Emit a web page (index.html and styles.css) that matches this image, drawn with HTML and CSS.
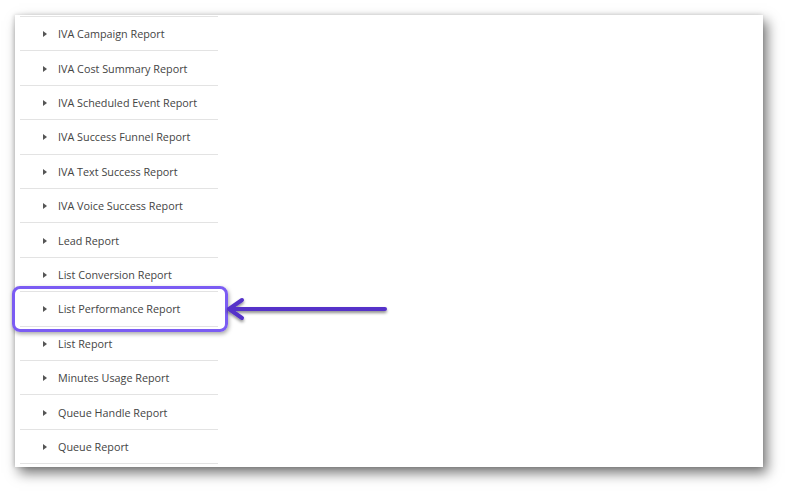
FILE: index.html
```html
<!DOCTYPE html>
<html>
<head>
<meta charset="utf-8">
<link rel="stylesheet" href="styles.css">
</head>
<body>
<div class="panel">
  <ul class="reports">
    <li class="row"><span class="caret"></span>IVA Campaign Report</li>
    <li class="row"><span class="caret"></span>IVA Cost Summary Report</li>
    <li class="row"><span class="caret"></span>IVA Scheduled Event Report</li>
    <li class="row"><span class="caret"></span>IVA Success Funnel Report</li>
    <li class="row"><span class="caret"></span>IVA Text Success Report</li>
    <li class="row"><span class="caret"></span>IVA Voice Success Report</li>
    <li class="row"><span class="caret"></span>Lead Report</li>
    <li class="row"><span class="caret"></span>List Conversion Report</li>
    <li class="row"><span class="caret"></span>List Performance Report</li>
    <li class="row"><span class="caret"></span>List Report</li>
    <li class="row"><span class="caret"></span>Minutes Usage Report</li>
    <li class="row"><span class="caret"></span>Queue Handle Report</li>
    <li class="row last"><span class="caret"></span>Queue Report</li>
  </ul>
</div>
<div class="highlight"></div>
<svg class="arrow" width="180" height="40" viewBox="0 0 180 40">
  <defs>
    <filter id="sh" x="-10%" y="-50%" width="120%" height="200%">
      <feDropShadow dx="0" dy="2" stdDeviation="1.5" flood-color="#000" flood-opacity="0.45"/>
    </filter>
  </defs>
  <g filter="url(#sh)" stroke="#5533c9" stroke-width="4" stroke-linecap="round" stroke-linejoin="round" fill="none">
    <path d="M5 20 H161"/>
    <path d="M18 11 L5 20 L18 29"/>
  </g>
</svg>
</body>
</html>
```
FILE: styles.css
```css
html, body {
  margin: 0;
  padding: 0;
  background: #ffffff;
}
body {
  width: 788px;
  height: 492px;
  position: relative;
  overflow: hidden;
  font-family: "Open Sans", "Liberation Sans", sans-serif;
}
.panel {
  position: absolute;
  left: 15px;
  top: 15px;
  width: 748px;
  height: 452px;
  background: #ffffff;
  box-shadow: 4px 6px 12px rgba(0, 0, 0, 0.55), -1px 0 4px rgba(0, 0, 0, 0.15);
}
.reports {
  list-style: none;
  margin: 1px 0 0 5px;
  padding: 0;
  width: 198px;
}
.row {
  display: flex;
  align-items: center;
  height: 33.42px;
  border-top: 1px solid #e3e3e3;
  font-size: 10.8px;
  color: #444444;
  padding-left: 23px;
}
.row.last {
  border-bottom: 1px solid #e3e3e3;
}
.caret {
  width: 0;
  height: 0;
  border-top: 3.5px solid transparent;
  border-bottom: 3.5px solid transparent;
  border-left: 4px solid #555555;
  margin-right: 11px;
  margin-top: 1px;
}
.highlight {
  position: absolute;
  left: 12px;
  top: 286px;
  width: 210px;
  height: 40px;
  border: 3px solid #7b5cf3;
  border-radius: 8px;
  box-shadow: 1px 2px 4px rgba(0, 0, 0, 0.35);
}
.arrow {
  position: absolute;
  left: 224px;
  top: 289px;
}
```
